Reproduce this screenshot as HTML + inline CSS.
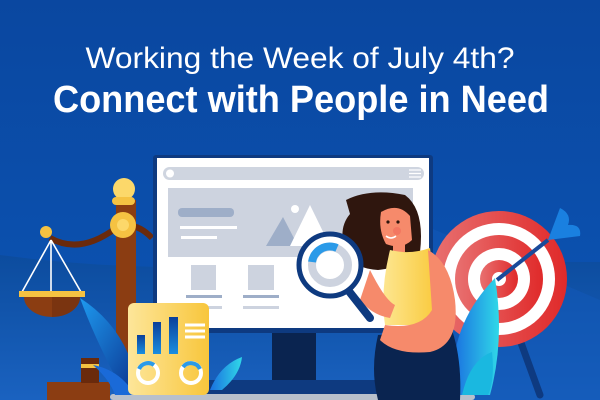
<!DOCTYPE html>
<html><head><meta charset="utf-8"><style>
html,body{margin:0;padding:0;width:600px;height:400px;overflow:hidden;background:#0b4aa3}
svg{display:block}
</style></head><body>
<svg width="600" height="400" viewBox="0 0 600 400" xmlns="http://www.w3.org/2000/svg">
<defs>
<linearGradient id="bg" x1="0" y1="0" x2="0" y2="1"><stop offset="0" stop-color="#0a47a0"/><stop offset="1" stop-color="#0c55b5"/></linearGradient>
<linearGradient id="low" x1="0" y1="0" x2="0" y2="1"><stop offset="0" stop-color="#0c4c9e"/><stop offset="1" stop-color="#1a62c0"/></linearGradient>
<linearGradient id="card" x1="0" y1="0" x2="1" y2="0"><stop offset="0" stop-color="#fde69a"/><stop offset="1" stop-color="#f8c63c"/></linearGradient>
<linearGradient id="bar" x1="0" y1="0" x2="0" y2="1"><stop offset="0" stop-color="#0a3f9a"/><stop offset="1" stop-color="#1a8ee0"/></linearGradient>
<linearGradient id="leaf" x1="0" y1="0" x2="1" y2="1"><stop offset="0" stop-color="#1e9af0"/><stop offset="1" stop-color="#0a2f8a"/></linearGradient>
<linearGradient id="leaf2" x1="0" y1="0" x2="1" y2="0"><stop offset="0" stop-color="#1a70e0"/><stop offset="1" stop-color="#30d8e8"/></linearGradient>
<linearGradient id="top" x1="0" y1="0" x2="1" y2="0"><stop offset="0" stop-color="#fde690"/><stop offset="1" stop-color="#f9c93a"/></linearGradient>
<linearGradient id="red" x1="0" y1="0" x2="1" y2="0"><stop offset="0" stop-color="#e87070"/><stop offset="1" stop-color="#e02a2a"/></linearGradient>
</defs>
<rect width="600" height="400" fill="url(#bg)"/>
<path d="M0 255 Q150 275 300 262 L600 262 L600 400 L0 400Z" fill="url(#low)"/>
<path d="M400 215 L600 300 L600 400 L400 400Z" fill="#1258b8" opacity=".6"/>

<text x="300" y="68" text-anchor="middle" font-family="Liberation Sans, sans-serif" font-size="30" fill="#fff" textLength="429" lengthAdjust="spacingAndGlyphs">Working the Week of July 4th?</text>
<text x="301" y="112" text-anchor="middle" font-family="Liberation Sans, sans-serif" font-size="38" font-weight="bold" fill="#fff" textLength="496" lengthAdjust="spacingAndGlyphs">Connect with People in Need</text>

<!-- scale -->
<path d="M50 238 Q80 255 116 228 Q135 220 152 238" stroke="#6a2a0c" stroke-width="6" fill="none"/>
<rect x="116" y="200" width="20" height="200" fill="#8b3d12"/>
<circle cx="124" cy="189" r="11" fill="#fcd86a"/>
<rect x="112" y="197" width="23" height="8" rx="4" fill="#f5c242"/>
<circle cx="123" cy="225" r="13" fill="#f5c242"/><circle cx="123" cy="225" r="6" fill="#fcd86a"/>
<circle cx="46" cy="232" r="6" fill="#f5c242"/>
<path d="M51 240 L22 292 M51 240 L51 292 M51 240 L81 292" stroke="#fff" stroke-width="1.6"/>
<path d="M24 297 A28 20 0 0 0 80 297Z" fill="#8b3d12"/>
<path d="M52 297 L80 297 A28 20 0 0 1 52 317Z" fill="#7a3410"/>
<rect x="19" y="291" width="66" height="6" fill="#f5c242"/>
<rect x="47" y="382" width="63" height="18" fill="#8b3d12"/>
<rect x="81" y="358" width="18" height="25" fill="#6a2a0c"/><rect x="81" y="364" width="18" height="4" fill="#f5c242"/>

<!-- monitor -->
<rect x="153" y="155" width="280" height="178" rx="3" fill="#0e3a80"/>
<rect x="157" y="158" width="272" height="170" fill="#fff"/>
<rect x="163" y="167" width="261" height="13" rx="6.5" fill="#cfd5e0"/>
<circle cx="170" cy="173.5" r="4" fill="#fff"/>
<path d="M409 170h12M409 173.5h12M409 177h12" stroke="#fff" stroke-width="1.3"/>
<rect x="168" y="188" width="245" height="69" fill="#cdd3df"/>
<rect x="178" y="208" width="56" height="9" rx="4" fill="#9eaec8"/>
<rect x="180" y="226" width="57" height="3" fill="#fff"/><rect x="181" y="236" width="36" height="3" fill="#fff"/>
<path d="M266 246 L283 217 L298 246Z" fill="#9eaec8"/><path d="M290 246 L310 205 L330 246Z" fill="#fff"/>
<circle cx="295" cy="209" r="4" fill="#fff"/>
<rect x="191" y="265" width="25" height="25" fill="#cdd3df"/><rect x="248" y="265" width="26" height="25" fill="#cdd3df"/>
<rect x="186" y="295" width="36" height="3" fill="#9eaec8"/><rect x="243" y="295" width="36" height="3" fill="#9eaec8"/>
<rect x="186" y="306" width="36" height="3" fill="#cdd3df"/><rect x="243" y="306" width="36" height="3" fill="#cdd3df"/>
<rect x="272" y="333" width="44" height="50" fill="#0a2450"/>
<rect x="185" y="380" width="220" height="15" fill="#0e3a80"/>
<rect x="110" y="394" width="365" height="6" rx="3" fill="#b8c0cc"/>

<!-- left leaves -->
<path d="M80 298 Q95 340 125 395 L140 395 Q130 330 80 298Z" fill="url(#leaf)"/>
<path d="M93 365 Q110 380 115 395 L135 395 Q120 370 93 365Z" fill="#1a6ad8"/>
<path d="M242 357 Q220 365 210 390 L222 390 Q240 375 242 357Z" fill="url(#leaf2)"/>

<!-- card -->
<rect x="128" y="303" width="81" height="92" rx="6" fill="url(#card)"/>
<rect x="137" y="335" width="8" height="19" fill="url(#bar)"/><rect x="153" y="322" width="8" height="32" fill="url(#bar)"/><rect x="169" y="317" width="9" height="37" fill="url(#bar)"/>
<path d="M185 325h20M185 331h20M185 337h20" stroke="#fff" stroke-width="3"/>
<circle cx="148" cy="373" r="10" fill="none" stroke="#fff" stroke-width="4"/>
<path d="M139 369 A10 10 0 0 1 154 365" fill="none" stroke="#2a9ae8" stroke-width="4"/>
<circle cx="191" cy="373" r="10" fill="none" stroke="#fff" stroke-width="4"/>
<path d="M183 367 A10 10 0 0 1 200 369" fill="none" stroke="#2a9ae8" stroke-width="4"/>

<!-- target -->
<path d="M520 340 L540 395" stroke="#0e3a80" stroke-width="7" stroke-linecap="round"/>
<circle cx="499" cy="279" r="68" fill="url(#red)"/>
<circle cx="499" cy="279" r="56" fill="#fff"/>
<circle cx="499" cy="279" r="44" fill="url(#red)"/>
<circle cx="499" cy="279" r="31" fill="#fff"/>
<circle cx="499" cy="279" r="19" fill="url(#red)"/>
<circle cx="499" cy="279" r="7" fill="#fff"/>
<path d="M497 280 L548 240" stroke="#1a4a9a" stroke-width="4"/>
<path d="M548 240 L560 208 Q572 214 568 225 Q582 224 580 236 Z" fill="#1a80e0"/>
<path d="M455 395 Q445 330 495 278 Q505 340 490 395Z" fill="url(#leaf2)"/>
<path d="M462 395 Q470 360 492 352 Q495 380 488 395Z" fill="#1ab8e0"/>

<!-- girl -->
<path d="M378 335 Q370 370 378 400 L460 400 Q462 360 452 330Z" fill="#0a2450"/>
<path d="M346 200 Q370 188 405 195 Q425 210 420 252 Q400 268 378 270 Q350 268 345 250 Q338 228 350 214Z" fill="#2f160e"/>
<path d="M381 212 Q398 202 410 216 L412 240 Q402 250 386 244 Q378 230 381 212Z" fill="#f68a6b"/>
<circle cx="388" cy="222" r="1.6" fill="#2f160e"/><circle cx="398" cy="222" r="1.6" fill="#2f160e"/>
<circle cx="397" cy="231" r="4" fill="#f26a5a" opacity=".6"/>
<path d="M386 236 Q391 240 396 236" stroke="#fff" stroke-width="1.5" fill="none"/>
<rect x="393" y="242" width="12" height="10" fill="#f68a6b"/>
<path d="M390 250 Q410 255 430 248 L437 300 Q440 320 428 325 L385 325 Q380 290 390 250Z" fill="url(#top)"/>
<path d="M428 250 Q450 262 455 300 Q460 345 430 352 Q395 355 380 340 L385 325 Q420 330 432 310 Z" fill="#f68a6b"/>
<path d="M370 270 Q385 300 395 305 L390 318 Q372 315 360 300Z" fill="#f68a6b"/>
<path d="M348 290 L370 318" stroke="#0e3a80" stroke-width="8" stroke-linecap="round"/>
<circle cx="330" cy="265" r="31" fill="#fff" stroke="#0e3a80" stroke-width="5"/>
<circle cx="330" cy="265" r="18" fill="none" stroke="#cdd3df" stroke-width="8"/>
<path d="M312 262 A18 18 0 0 1 337 248" fill="none" stroke="#2a9ae8" stroke-width="8"/>
</svg>
</body></html>
